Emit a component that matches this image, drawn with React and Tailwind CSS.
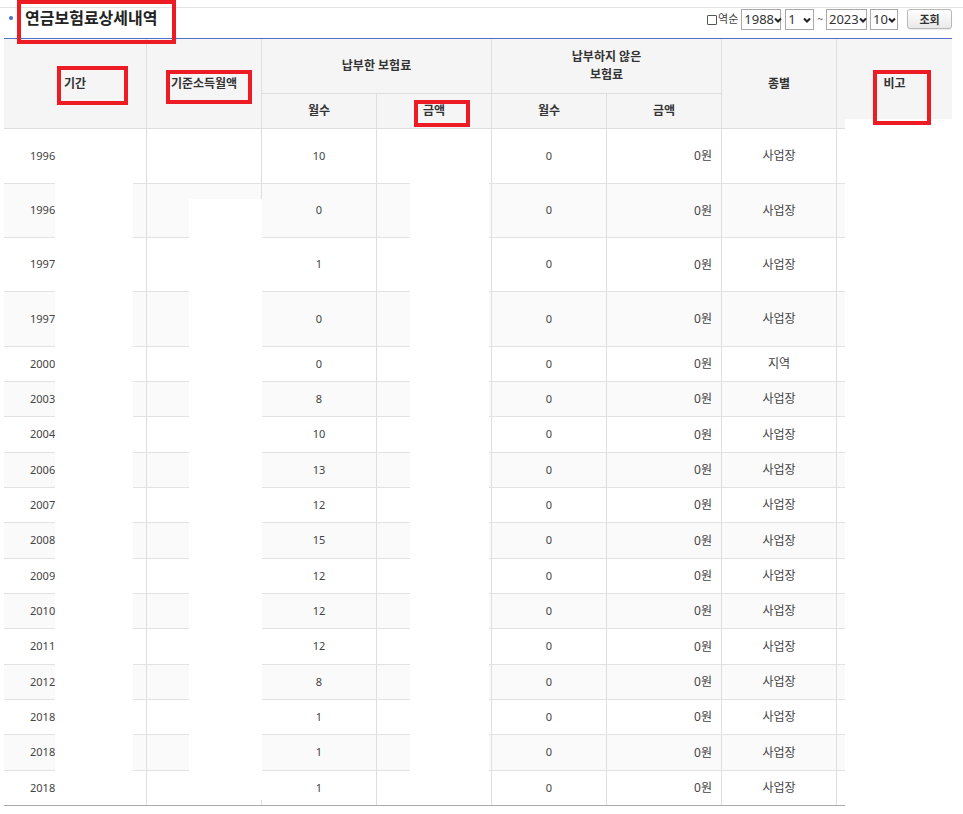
import React from "react";

const FONT = { fontFamily: '"Noto Sans", "Noto Sans CJK KR", sans-serif' };

const rows = [
  ["1996", "10", "사업장", "h-[55px]"],
  ["1996", "0", "사업장", "h-[54px]"],
  ["1997", "1", "사업장", "h-[54px]"],
  ["1997", "0", "사업장", "h-[55px]"],
  ["2000", "0", "지역", "h-[35px]"],
  ["2003", "8", "사업장", "h-[35px]"],
  ["2004", "10", "사업장", "h-[36px]"],
  ["2006", "13", "사업장", "h-[35px]"],
  ["2007", "12", "사업장", "h-[35px]"],
  ["2008", "15", "사업장", "h-[36px]"],
  ["2009", "12", "사업장", "h-[35px]"],
  ["2010", "12", "사업장", "h-[35px]"],
  ["2011", "12", "사업장", "h-[36px]"],
  ["2012", "8", "사업장", "h-[35px]"],
  ["2018", "1", "사업장", "h-[35px]"],
  ["2018", "1", "사업장", "h-[36px]"],
  ["2018", "1", "사업장", "h-[35px]"],
];

function Chevron() {
  return (
    <svg width="8" height="6" viewBox="0 0 8 6" className="shrink-0">
      <polyline points="1,1.5 4,4.5 7,1.5" fill="none" stroke="#222" strokeWidth="2" />
    </svg>
  );
}

function Select({ value, w }) {
  return (
    <div className={`${w} h-[21px] border border-[#a9a9a9] bg-white flex items-center justify-between pl-[2px] pr-[2px] text-[13px] leading-none text-[#333]`}>
      <span>{value}</span>
      <Chevron />
    </div>
  );
}

const cols = "grid grid-cols-[143px_115px_115px_115px_115px_115px_115px_115px]";

export default function App() {
  return (
    <div className="relative w-[963px] h-[814px] bg-white overflow-hidden text-[#333]" style={FONT}>
      <div className="pt-[7px]">
        <div className="border-t border-[#e3e3e3]">
          <div className="ml-[4px] w-[948px] h-[31px] border-b border-[#5470c6] flex items-start justify-between">
            <div className="flex items-center mt-[1px] h-[18px]">
              <span className="ml-[5px] w-[4px] h-[4px] rounded-full bg-[#4f6bd0]"></span>
              <span className="ml-[12px] text-[16px] font-bold leading-[18px] text-[#222]">연금보험료상세내역</span>
            </div>
            <div className="flex items-center mt-[1px] h-[21px]">
              <span className="w-[10px] h-[10px] border border-[#555] rounded-[1px] bg-white"></span>
              <span className="ml-[1px] text-[11px] text-[#444]">역순</span>
              <div className="ml-[3px]"><Select value="1988" w="w-[40px]" /></div>
              <div className="ml-[4px]"><Select value="1" w="w-[29px]" /></div>
              <span className="mx-[3px] text-[10px] text-[#666]">~</span>
              <Select value="2023" w="w-[41px]" />
              <div className="ml-[3px]"><Select value="10" w="w-[28px]" /></div>
              <button className="ml-[9px] -mt-[1px] w-[45px] h-[20px] border border-[#b8b8b8] rounded-[3px] bg-gradient-to-b from-[#ffffff] to-[#e9e9e9] text-[11px] font-bold text-[#333] leading-none shadow-[0_1px_1px_rgba(0,0,0,0.08)]">
                조회
              </button>
            </div>
          </div>

          <div className="ml-[4px] w-[948px]">
            {/* header */}
            <div className={`${cols} grid-rows-[55px_35px] bg-[#f5f5f5] text-[12px] font-bold text-[#333]`}>
              <div className="row-span-2 border-r border-b border-[#dedede] flex items-center justify-center">기간</div>
              <div className="row-span-2 border-r border-b border-[#dedede] flex items-center justify-center">기준소득월액</div>
              <div className="col-span-2 border-r border-b border-[#dedede] flex items-center justify-center">납부한 보험료</div>
              <div className="col-span-2 border-r border-b border-[#dedede] flex items-center justify-center text-center leading-[18px]">
                납부하지 않은<br />보험료
              </div>
              <div className="row-span-2 border-r border-b border-[#dedede] flex items-center justify-center">종별</div>
              <div className="row-span-2 border-b border-[#dedede] flex items-center justify-center">비고</div>
              <div className="border-r border-b border-[#dedede] flex items-center justify-center">월수</div>
              <div className="border-r border-b border-[#dedede] flex items-center justify-center">금액</div>
              <div className="border-r border-b border-[#dedede] flex items-center justify-center">월수</div>
              <div className="border-r border-b border-[#dedede] flex items-center justify-center">금액</div>
            </div>
            {/* body */}
            {rows.map((r, i) => {
              const last = i === rows.length - 1;
              return (
                <div
                  key={i}
                  className={`${cols} ${r[3]} border-b ${last ? "border-[#aaaaaa]" : "border-[#e2e2e2]"} ${i % 2 === 1 ? "bg-[#fafafa]" : "bg-white"} text-[11px] text-[#444]`}
                >
                  <div className="border-r border-[#dedede] flex items-center pl-[26px]">{r[0]}</div>
                  <div className="border-r border-[#dedede]"></div>
                  <div className="border-r border-[#dedede] flex items-center justify-center">{r[1]}</div>
                  <div className="border-r border-[#dedede]"></div>
                  <div className="border-r border-[#dedede] flex items-center justify-center">0</div>
                  <div className="border-r border-[#dedede] flex items-center justify-end pr-[9px] text-[12px]">0원</div>
                  <div className="border-r border-[#dedede] flex items-center justify-center text-[12px]">{r[2]}</div>
                  <div></div>
                </div>
              );
            })}
          </div>
        </div>
      </div>

      {/* redaction boxes */}
      <div className="absolute left-[55px] top-[183px] w-[78px] h-[621px] bg-white"></div>
      <div className="absolute left-[189px] top-[199px] w-[73px] h-[601px] bg-white"></div>
      <div className="absolute left-[410px] top-[150px] w-[79px] h-[654px] bg-white"></div>
      <div className="absolute left-[845px] top-[119px] w-[118px] h-[695px] bg-white"></div>

      {/* red annotation boxes */}
      <div className="absolute left-[17px] top-[0px] w-[159px] h-[44px] border-[4px] border-[#ed1c24]"></div>
      <div className="absolute left-[57px] top-[66px] w-[71px] h-[39px] border-[4px] border-[#ed1c24]"></div>
      <div className="absolute left-[166px] top-[70px] w-[86px] h-[34px] border-[4px] border-[#ed1c24]"></div>
      <div className="absolute left-[414px] top-[100px] w-[56px] h-[27px] border-[4px] border-[#ed1c24]"></div>
      <div className="absolute left-[873px] top-[70px] w-[58px] h-[55px] border-[4px] border-[#ed1c24]"></div>
    </div>
  );
}
